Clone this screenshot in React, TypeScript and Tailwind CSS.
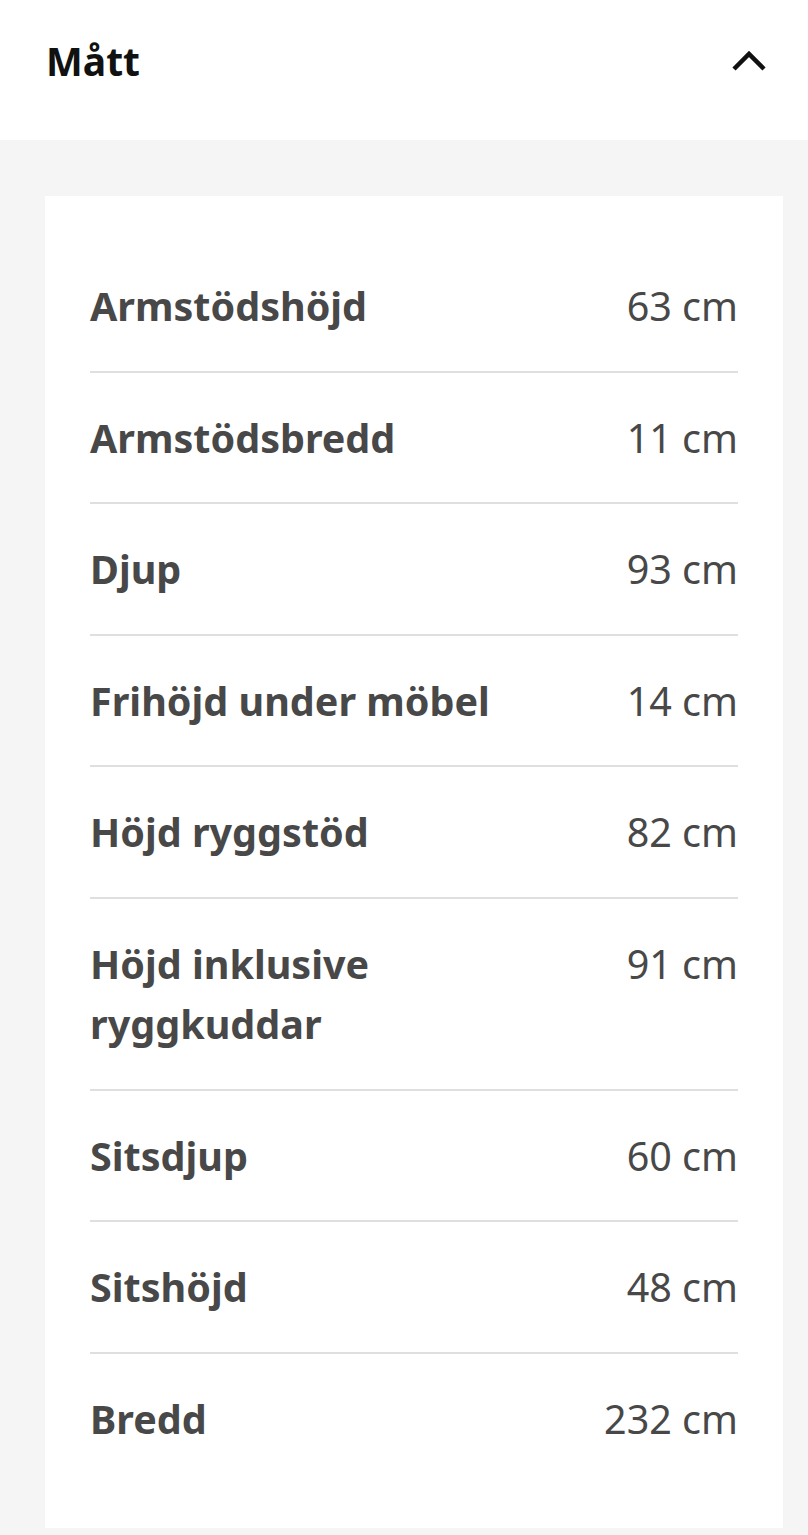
import React from 'react';

const rows: { label: string; value: string }[] = [
  { label: 'Armstödshöjd', value: '63 cm' },
  { label: 'Armstödsbredd', value: '11 cm' },
  { label: 'Djup', value: '93 cm' },
  { label: 'Frihöjd under möbel', value: '14 cm' },
  { label: 'Höjd ryggstöd', value: '82 cm' },
  { label: 'Höjd inklusive ryggkuddar', value: '91 cm' },
  { label: 'Sitsdjup', value: '60 cm' },
  { label: 'Sitshöjd', value: '48 cm' },
  { label: 'Bredd', value: '232 cm' },
];

function ChevronUp() {
  return (
    <svg width="36" height="24" viewBox="0 0 36 24" fill="none" aria-hidden="true">
      <path d="M3 20 L18 5 L33 20" stroke="#111111" strokeWidth="4.5" />
    </svg>
  );
}

export default function App() {
  return (
    <div className="min-h-[1535px] w-[808px] bg-[#f5f5f5]" style={{ fontFamily: '"Noto Sans", "Open Sans", sans-serif' }}>
      <header className="h-[140px] bg-white flex items-center justify-between pl-[46px] pr-[41px] pb-[18px]">
        <h2 className="text-[39px] leading-[60px] font-bold text-[#111111]">Mått</h2>
        <button type="button" className="flex items-center justify-center">
          <ChevronUp />
        </button>
      </header>

      <section className="pt-[56px] pb-[8px]">
        <div className="ml-[45px] w-[738px] bg-white px-[45px] pt-[45px] pb-[45px]">
          {rows.map((row, i) => (
            <div
              key={row.label}
              className={
                i === rows.length - 1
                  ? 'flex justify-between pt-[35px] pb-[34px]'
                  : 'flex justify-between pt-[35px] pb-[34px] border-b-2 border-[#dfdfdf]'
              }
            >
              <span className="w-[450px] text-[39.5px] leading-[60.5px] font-bold text-[#484848]">{row.label}</span>
              <span className="text-[39.5px] leading-[60.5px] text-[#484848] text-right">{row.value}</span>
            </div>
          ))}
        </div>
      </section>
    </div>
  );
}
